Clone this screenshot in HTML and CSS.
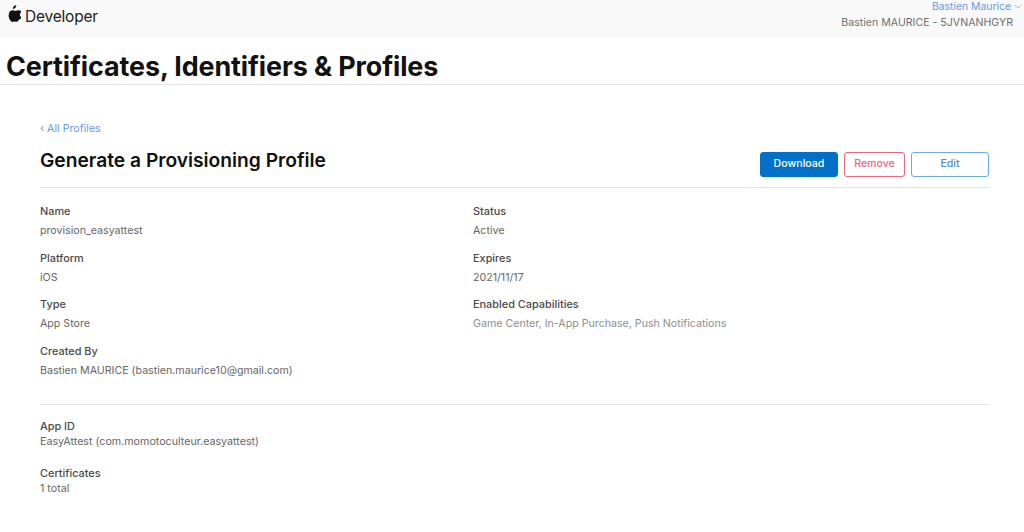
FILE: index.html
```html
<!DOCTYPE html>
<html lang="en">
<head>
<meta charset="utf-8">
<title>Certificates, Identifiers &amp; Profiles</title>
<link rel="stylesheet" href="styles.css">
</head>
<body>
<header class="topbar">
  <div class="brand">
    <svg class="apple" viewBox="0 0 170 200" aria-hidden="true"><path d="M150 170c-8 13-12 18-18 24-8 8-17 9-27 5-9-4-17-4-27 0-12 5-19 4-27-4C25 170 14 131 24 97c7-23 25-36 45-36 10 0 20 4 28 7 6 2 10 2 15-1 11-5 20-8 32-6 15 2 25 8 32 19-23 14-28 45-6 63 3 3 6 4 9 6-6 13-12 14-19 21zM113 0c2 22-18 46-42 44C68 22 90 1 113 0z"/></svg>
    <span class="brand-name">Developer</span>
  </div>
  <div class="account">
    <div class="account-name">Bastien Maurice <svg class="chev" viewBox="0 0 8 5" aria-hidden="true"><path d="M.5.8 4 4l3.5-3.2"/></svg></div>
    <div class="account-team">Bastien MAURICE - 5JVNANHGYR</div>
  </div>
</header>
<h1 class="page-title">Certificates, Identifiers &amp; Profiles</h1>
<main class="content">
  <a class="back" href="#">‹ All Profiles</a>
  <div class="head-row">
    <h2 class="profile-title">Generate a Provisioning Profile</h2>
    <div class="actions">
      <a class="btn btn-download" href="#">Download</a>
      <a class="btn btn-remove" href="#">Remove</a>
      <a class="btn btn-edit" href="#">Edit</a>
    </div>
  </div>
  <section class="details">
    <div class="column">
      <div class="item"><div class="label">Name</div><div class="value">provision_easyattest</div></div>
      <div class="item"><div class="label">Platform</div><div class="value">iOS</div></div>
      <div class="item"><div class="label">Type</div><div class="value">App Store</div></div>
      <div class="item"><div class="label">Created By</div><div class="value">Bastien MAURICE (bastien.maurice10@gmail.com)</div></div>
    </div>
    <div class="column">
      <div class="item"><div class="label">Status</div><div class="value">Active</div></div>
      <div class="item"><div class="label">Expires</div><div class="value">2021/11/17</div></div>
      <div class="item"><div class="label">Enabled Capabilities</div><div class="value muted">Game Center, In-App Purchase, Push Notifications</div></div>
    </div>
  </section>
  <section class="extra">
    <div class="item-tight"><div class="label">App ID</div><div class="value-tight">EasyAttest (com.momotoculteur.easyattest)</div></div>
    <div class="item-tight"><div class="label">Certificates</div><div class="value-tight">1 total</div></div>
  </section>
</main>
</body>
</html>
```
FILE: styles.css
```css
* { box-sizing: border-box; }
html, body { margin: 0; padding: 0; }
body {
  background: #fff;
  font-family: Inter, "Liberation Sans", sans-serif;
  color: #333;
  height: 532px;
  overflow: hidden;
}
.topbar {
  height: 37px;
  background: #f9f9f9;
  display: flex;
  justify-content: space-between;
  padding: 0 2px 0 7px;
}
.brand { display: flex; align-items: flex-start; gap: 4px; padding-top: 6px; }
.apple { width: 14px; height: 17px; fill: #111; margin-top: -1px; }
.brand-name { font-size: 15.5px; line-height: 20px; color: #222; letter-spacing: -0.2px; margin-top: 1px; }
.account { text-align: right; font-size: 10.6px; line-height: 16px; }
.account-name { color: #6a9bdc; margin-top: -1px; height: 16px; font-size: 10.4px; }
.account-team { color: #707070; padding-right: 9px; margin-top: 0; }
.chev { width: 8px; height: 5px; fill: none; stroke: #b4bccb; stroke-width: 1; vertical-align: 1px; }
.page-title {
  margin: 0;
  height: 48px;
  padding: 11px 0 0 6px;
  font-size: 26.9px;
  line-height: 36px;
  font-weight: 700;
  color: #111;
  border-bottom: 1px solid #e2e2e2;
  letter-spacing: -0.1px;
}
.content { padding: 37px 35px 0 40px; }
.back { display: block; font-size: 10.7px; line-height: 14px; color: #6a9bdc; text-decoration: none; }
.head-row {
  display: flex;
  justify-content: space-between;
  height: 46px;
  margin-top: 6px;
  border-bottom: 1px solid #e2e2e2;
}
.profile-title { margin: 0; padding-top: 6px; font-size: 19.2px; line-height: 24px; font-weight: 600; color: #111; }
.actions { display: flex; padding-top: 10px; }
.btn {
  height: 25px;
  border-radius: 3px;
  font-size: 10.6px;
  font-weight: 500;
  line-height: 21px;
  text-align: center;
  text-decoration: none;
  border: 1px solid;
}
.btn-download { width: 78px; background: #0070c9; border-color: #0070c9; color: #fff; }
.btn-remove { width: 61px; margin-left: 6px; border-color: #e66a7b; color: #e66a7b; }
.btn-edit { width: 78px; margin-left: 6px; border-color: #6aaee2; color: #4d8fcb; }
.details {
  display: grid;
  grid-template-columns: 433px 1fr;
  padding-top: 16px;
  height: 217px;
  border-bottom: 1px solid #e2e2e2;
}
.item { height: 46.7px; }
.label { font-size: 10.9px; line-height: 15px; font-weight: 450; color: #4a4a4a; }
.value { font-size: 10.65px; line-height: 15px; margin-top: 4px; color: #666; }
.muted { color: #8e8e8e; }
.extra { padding-top: 14px; }
.item-tight { height: 47px; }
.value-tight { font-size: 10.7px; line-height: 15px; color: #666; }
```
